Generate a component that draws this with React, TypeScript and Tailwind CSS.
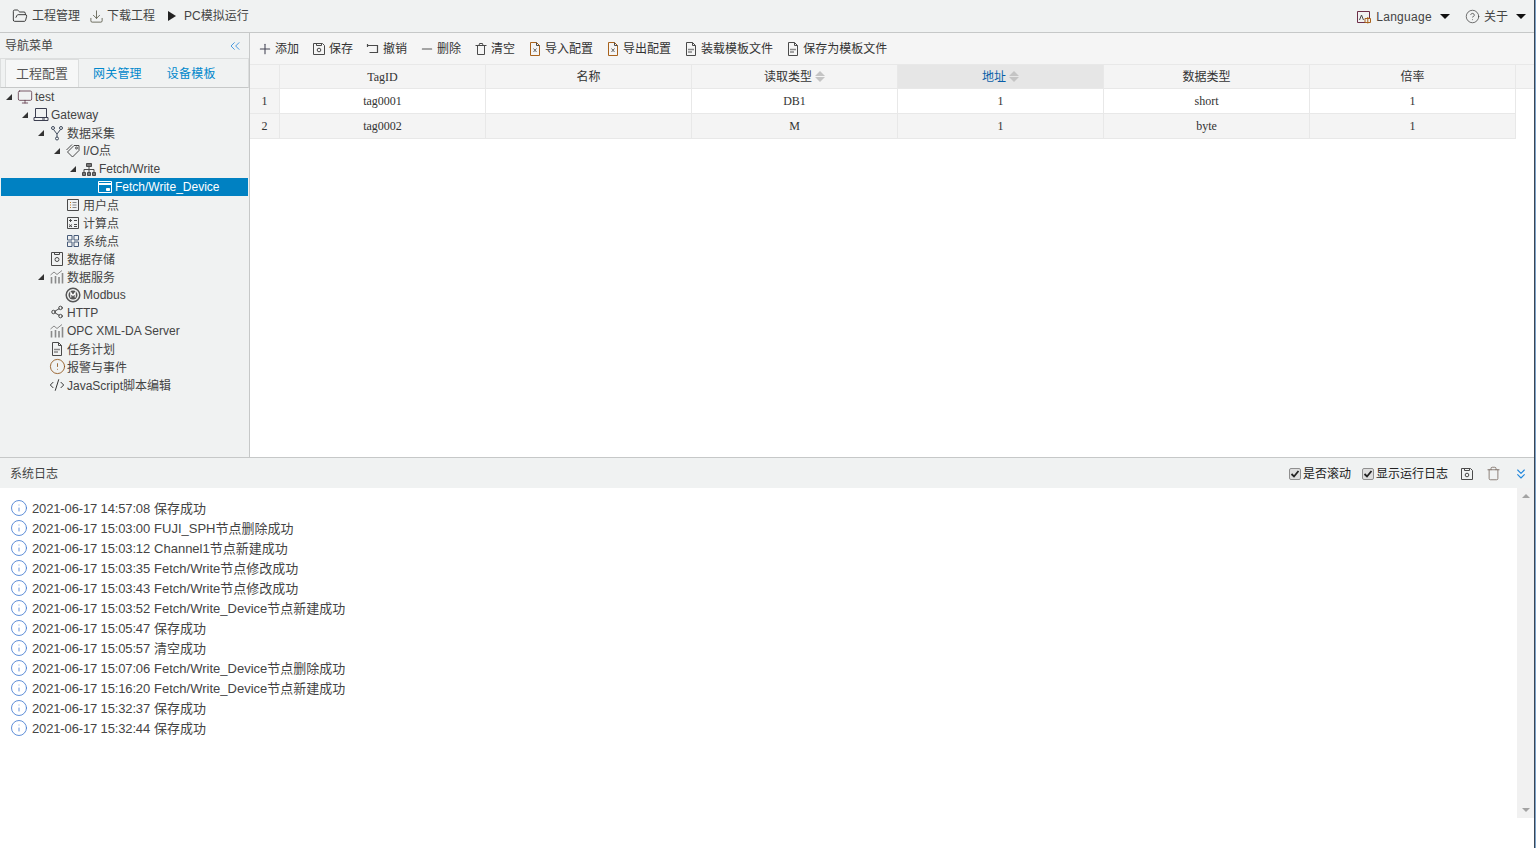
import type { ReactNode } from 'react';
import {
  AlertCircle,
  ChevronsLeft,
  ChevronsDown,
  CodeXml,
  Download,
  FolderOpen,
  HelpCircle,
  Info,
  Minus,
  Monitor,
  Plus,
  Share2,
  Trash,
} from 'lucide-react';

const cjk = "font-['Liberation_Sans','Noto_Sans_CJK_SC',sans-serif]";

type SvgProps = { children: ReactNode; className?: string };

function Ico({ children, className = 'text-[#4a4a4a]' }: SvgProps) {
  return (
    <svg width="16" height="16" viewBox="0 0 16 16" fill="none" stroke="currentColor" strokeWidth="1" className={`shrink-0 ${className}`}>
      {children}
    </svg>
  );
}

const SaveIco = () => (
  <Ico>
    <path d="M2.5 2.500h9l2 2v9h-11z" />
    <path d="M5.500 2.500v2h5v-2" />
    <circle cx="8" cy="9" r="1.800" />
  </Ico>
);
const UndoIco = () => (
  <Ico>
    <path d="M2.500 4.500h10v7h-8" strokeWidth="1.200" />
    <path d="M2.500 3v3" strokeWidth="1.200" />
  </Ico>
);
const ClearIco = () => (
  <Ico>
    <path d="M4.500 4.500v9h7v-9" />
    <path d="M2.500 4.500h11M6 4.500l.5-2h3l.5 2" />
  </Ico>
);
const FileXIco = () => (
  <Ico>
    <path d="M3.500 1.500h6l3 3v10h-9z" className="text-[#a8621c]" />
    <path d="M9.500 1.500v3h3" />
    <path d="M6.500 7.500l3 3.500M9.500 7.500l-3 3.500" className="text-[#666]" />
  </Ico>
);
const FileIco = () => (
  <Ico>
    <path d="M3.500 1.500h6l3 3v10h-9z" />
    <path d="M9.500 1.500v3h3" />
    <path d="M5 8.500h6M5 11h4" strokeWidth="1.400" className="text-[#888]" />
  </Ico>
);
const ForkIco = () => (
  <Ico className="text-[#3f4a5c]">
    <circle cx="4" cy="3" r="1.500" />
    <circle cx="12" cy="3" r="1.500" />
    <circle cx="8" cy="13.500" r="1.500" />
    <path d="M4.500 4.500L8 9l3.500-4.500M8 9v3" />
  </Ico>
);
const TagIco = () => (
  <Ico>
    <path d="M9 2.500h5v5l-6.500 6.500-5-5z" />
    <path d="M7 1.500l-5.500 5.500" />
    <circle cx="11.500" cy="5" r="1" />
  </Ico>
);
const LaptopIco = () => (
  <Ico className="text-[#3c3f50]">
    <path d="M2.500 1.500h11v9h-11z" />
    <path d="M1 13.500h14v-3H1z" />
    <path d="M9 12h3" />
  </Ico>
);
const NetworkIco = () => (
  <Ico>
    <path d="M5.500 2.500h5v3h-5z" fill="#777" />
    <path d="M8 5.500v3M3 11V8.500h10V11M8 8.500V11" />
    <path d="M1.500 11.500h3v3h-3zM6.500 11.500h3v3h-3zM11.500 11.500h3v3h-3z" fill="#777" />
  </Ico>
);
const DeviceIco = () => (
  <Ico className="text-white">
    <path d="M1.500 2.500h13v11h-13z" />
    <path d="M1.500 5h13" strokeWidth="2" />
    <path d="M9.500 9.500h3v2h-3z" fill="currentColor" />
  </Ico>
);
const ListIco = () => (
  <Ico>
    <path d="M2.500 2.500h11v11h-11z" />
    <path d="M5 5.500h1M5 8h1M5 10.500h1" className="text-[#c77a1e]" />
    <path d="M7.500 5.500h4M7.500 8h4M7.500 10.500h4" className="text-[#888]" />
  </Ico>
);
const CalcIco = () => (
  <Ico>
    <path d="M2.500 2.500h11v11h-11z" />
    <path d="M4 5.500h3M5.500 4v3M9 5.500h3M4 9.500l3 2.500M7 9.500L4 12M9 9.500h3M9 11.500h3" />
  </Ico>
);
const GridIco = () => (
  <Ico className="text-[#465a78]">
    <path d="M2.500 2.500h4.500v4.500h-4.500zM9 2.500h4.500v4.500H9zM2.500 9h4.500v4.500h-4.500zM9 9h4.500v4.500H9z" />
  </Ico>
);
const DbSaveIco = () => (
  <Ico>
    <path d="M2.500 1.500h11v13h-11z" />
    <path d="M5.500 1.500v2h5v-2" />
    <circle cx="8" cy="8.500" r="2" />
  </Ico>
);
const ChartIco = () => (
  <Ico className="text-[#8a8a8a]">
    <path d="M2.500 14.500V8M6.500 14.500V7M10 14.500V8M13.500 14.500V4" strokeWidth="1.600" />
    <path d="M1.500 6l3.500-3 3 2.500 5-4" />
  </Ico>
);
const ModbusIco = () => (
  <svg width="16" height="16" viewBox="0 0 16 16" className="shrink-0">
    <circle cx="8" cy="8" r="6.800" fill="none" stroke="#555" strokeWidth="1.500" />
    <circle cx="8" cy="8" r="4.500" fill="#555" />
    <path d="M5.800 10.500v-5l2.200 3 2.200-3v5" fill="none" stroke="#fff" strokeWidth="1.100" />
  </svg>
);
const LangIco = () => (
  <Ico>
    <path d="M1.500 2.500h12v11h-12z" className="text-[#6e2f48]" />
    <path d="M3.500 11l2-5 2 5" />
    <path d="M9 9.500h5.500v4H9z" fill="#f0f2f2" className="text-[#a8621c]" />
    <path d="M11.800 8v6.500" className="text-[#a8621c]" />
  </Ico>
);

type Node = { depth: number; label: string; icon: ReactNode; open?: boolean; selected?: boolean; low?: boolean };

const nodes: Node[] = [
  { depth: 0, label: 'test', open: true, icon: <Monitor size={16} strokeWidth={1.2} className="shrink-0 text-[#5a3444]" /> },
  { depth: 1, label: 'Gateway', open: true, icon: <LaptopIco /> },
  { depth: 2, label: '数据采集', open: true, low: true, icon: <ForkIco /> },
  { depth: 3, label: 'I/O点', open: true, icon: <TagIco /> },
  { depth: 4, label: 'Fetch/Write', open: true, icon: <NetworkIco /> },
  { depth: 5, label: 'Fetch/Write_Device', selected: true, icon: <DeviceIco /> },
  { depth: 3, label: '用户点', low: true, icon: <ListIco /> },
  { depth: 3, label: '计算点', low: true, icon: <CalcIco /> },
  { depth: 3, label: '系统点', low: true, icon: <GridIco /> },
  { depth: 2, label: '数据存储', low: true, icon: <DbSaveIco /> },
  { depth: 2, label: '数据服务', open: true, low: true, icon: <ChartIco /> },
  { depth: 3, label: 'Modbus', icon: <ModbusIco /> },
  { depth: 2, label: 'HTTP', icon: <Share2 size={14} strokeWidth={1.5} className="mx-px mb-[2px] shrink-0 text-[#333]" /> },
  { depth: 2, label: 'OPC XML-DA Server', icon: <ChartIco /> },
  { depth: 2, label: '任务计划', low: true, icon: <FileIco /> },
  { depth: 2, label: '报警与事件', low: true, icon: <AlertCircle size={17} strokeWidth={1.2} className="-mx-[0.5px] mb-[1px] shrink-0 text-[#8f5318]" /> },
  { depth: 2, label: 'JavaScript脚本编辑', low: true, icon: <CodeXml size={16} strokeWidth={1.5} className="shrink-0 text-[#333]" /> },
];

const toolbar: { label: string; icon: ReactNode }[] = [
  { label: '添加', icon: <Plus size={16} strokeWidth={1.6} className="shrink-0 text-[#445]" /> },
  { label: '保存', icon: <SaveIco /> },
  { label: '撤销', icon: <UndoIco /> },
  { label: '删除', icon: <Minus size={16} strokeWidth={1.6} className="shrink-0 text-[#555]" /> },
  { label: '清空', icon: <ClearIco /> },
  { label: '导入配置', icon: <FileXIco /> },
  { label: '导出配置', icon: <FileXIco /> },
  { label: '装载模板文件', icon: <FileIco /> },
  { label: '保存为模板文件', icon: <FileIco /> },
];

const columns = [
  { title: 'TagID' },
  { title: '名称' },
  { title: '读取类型', sort: true },
  { title: '地址', sort: true, active: true },
  { title: '数据类型' },
  { title: '倍率' },
];

const rows = [
  ['tag0001', '', 'DB1', '1', 'short', '1'],
  ['tag0002', '', 'M', '1', 'byte', '1'],
];

const logs = [
  ['2021-06-17 14:57:08', '保存成功'],
  ['2021-06-17 15:03:00', 'FUJI_SPH节点删除成功'],
  ['2021-06-17 15:03:12', 'Channel1节点新建成功'],
  ['2021-06-17 15:03:35', 'Fetch/Write节点修改成功'],
  ['2021-06-17 15:03:43', 'Fetch/Write节点修改成功'],
  ['2021-06-17 15:03:52', 'Fetch/Write_Device节点新建成功'],
  ['2021-06-17 15:05:47', '保存成功'],
  ['2021-06-17 15:05:57', '清空成功'],
  ['2021-06-17 15:07:06', 'Fetch/Write_Device节点删除成功'],
  ['2021-06-17 15:16:20', 'Fetch/Write_Device节点新建成功'],
  ['2021-06-17 15:32:37', '保存成功'],
  ['2021-06-17 15:32:44', '保存成功'],
];

function Caret() {
  return <span className="h-0 w-0 border-x-[5px] border-t-[5px] border-x-transparent border-t-[#111]" />;
}

function SortArrows() {
  return (
    <span className="flex flex-col gap-px">
      <span className="h-0 w-0 border-x-[5px] border-b-[5px] border-x-transparent border-b-[#c4c4c4]" />
      <span className="h-0 w-0 border-x-[5px] border-t-[5px] border-x-transparent border-t-[#c4c4c4]" />
    </span>
  );
}

function Check({ label }: { label: string }) {
  return (
    <div className="flex items-center gap-[2px]">
      <span className="flex h-3 w-3 items-center justify-center rounded-[2px] border border-[#8f8f8f] bg-[#dedede]">
        <svg width="10" height="10" viewBox="0 0 10 10" fill="none" stroke="#222" strokeWidth="1.800">
          <path d="M1.500 5l2.500 2.500 4.500-5.500" />
        </svg>
      </span>
      <span className="text-[#222]">{label}</span>
    </div>
  );
}

export default function App() {
  return (
    <div className={`flex h-screen overflow-hidden bg-white text-xs text-[#444] ${cjk}`}>
      <div className="flex min-w-0 flex-1 flex-col">
        {/* top bar */}
        <div className="flex h-[33px] shrink-0 items-center justify-between border-b border-[#c6c8c8] bg-[#f0f2f2]">
          <div className="flex items-center pl-[12px]">
            <div className="flex items-center gap-[4px]">
              <FolderOpen size={16} strokeWidth={1.3} className="text-[#222]" />
              <span>工程管理</span>
            </div>
            <div className="ml-[9px] flex items-center gap-[3px]">
              <Download size={15} strokeWidth={1.3} className="text-[#554]" />
              <span>下载工程</span>
            </div>
            <div className="ml-[12px] flex items-center gap-[8px]">
              <svg width="8" height="10" viewBox="0 0 8 10" className="ml-[1px]"><path d="M0 0l8 5-8 5z" fill="#222" /></svg>
              <span>PC模拟运行</span>
            </div>
          </div>
          <div className="flex items-center pr-[8px] pt-[1px]">
            <div className="flex items-center gap-[4px]">
              <LangIco />
              <span className="tracking-[0.3px]">Language</span>
              <span className="ml-[4px] flex"><Caret /></span>
            </div>
            <div className="ml-[15px] flex items-center gap-[4px]">
              <HelpCircle size={15} strokeWidth={1.2} className="text-[#444]" />
              <span>关于</span>
              <span className="ml-[4px] flex"><Caret /></span>
            </div>
          </div>
        </div>

        <div className="flex h-[424px] shrink-0">
          {/* sidebar */}
          <aside className="flex w-[250px] shrink-0 flex-col border-r border-[#c6c8c8] bg-[#f0f2f2]">
            <div className="flex h-[25px] shrink-0 items-center justify-between pl-[5px] pr-[6px]">
              <span>导航菜单</span>
              <ChevronsLeft size={16} strokeWidth={1.5} className="text-[#4a9ae0]" />
            </div>
            <div className="flex h-[30px] shrink-0 items-end border border-b-[#c6c8c8] border-[#dcdede] pl-[4px] text-[#0088cc]">
              <div className="flex h-[28px] w-[74px] items-center justify-center border border-b-0 border-[#dcdede] bg-[#f6f7f7] pt-[1px] text-[13px] text-[#555]">
                工程配置
              </div>
              <div className="ml-[14px] flex h-[28px] items-center pt-[2px] tracking-[0.2px]">网关管理</div>
              <div className="ml-[25px] flex h-[28px] items-center pt-[2px] tracking-[0.2px]">设备模板</div>
            </div>
            <div className="flex flex-col px-[1px]">
              {nodes.map((n) => (
                <div
                  key={n.label + n.depth}
                  style={{ paddingLeft: n.depth * 16 }}
                  className={`flex h-[18px] items-center ${n.selected ? 'bg-[#0081c2] text-white' : ''}`}
                >
                  <span className="flex w-[16px] shrink-0 items-center justify-center pr-[1px]">
                    {n.open && <span className="h-0 w-0 border-b-[6px] border-l-[6px] border-b-[#333] border-l-transparent" />}
                  </span>
                  {n.icon}
                  <span className={`ml-[2px] whitespace-nowrap ${n.low ? 'pt-[2px]' : ''}`}>{n.label}</span>
                </div>
              ))}
            </div>
          </aside>

          {/* main */}
          <main className="flex min-w-0 flex-1 flex-col">
            <div className="flex h-[31px] shrink-0 items-center bg-[#f5f5f5] pl-[7px] pt-[1px]">
              {toolbar.map((t) => (
                <div key={t.label} className="mr-[12px] flex items-center gap-[2px] text-[#333]">
                  {t.icon}
                  <span className="whitespace-nowrap">{t.label}</span>
                </div>
              ))}
            </div>
            <div className="flex h-[25px] shrink-0 border-y border-[#e8e8e8] bg-[#f4f4f4] font-['Liberation_Serif','Noto_Sans_CJK_SC',serif]">
              <div className="w-[30px] shrink-0 border-r border-[#e8e8e8]" />
              {columns.map((c) => (
                <div
                  key={c.title}
                  className={`flex w-[206px] shrink-0 items-center justify-center gap-[3px] border-r border-[#e8e8e8] ${c.active ? 'bg-[#e6e6e6] text-[#0a5ea8]' : 'text-[#333]'}`}
                >
                  <span>{c.title}</span>
                  {c.sort && <SortArrows />}
                </div>
              ))}
            </div>
            {rows.map((r, i) => (
              <div
                key={r[0]}
                className={`flex h-[25px] w-[1266px] shrink-0 border-b border-[#e8e8e8] font-['Liberation_Serif','Noto_Sans_CJK_SC',serif] text-[#333] ${i === 1 ? 'bg-[#f4f4f4]' : ''}`}
              >
                <div className="flex w-[30px] shrink-0 items-center justify-center border-r border-[#e8e8e8] bg-[#f4f4f4]">{i + 1}</div>
                {r.map((v, j) => (
                  <div key={j} className="flex w-[206px] shrink-0 items-center justify-center border-r border-[#e8e8e8]">
                    {v}
                  </div>
                ))}
              </div>
            ))}
          </main>
        </div>

        {/* system log */}
        <section className="flex min-h-0 flex-1 flex-col border-t border-[#c6c8c8]">
          <div className="flex h-[30px] shrink-0 items-center justify-between bg-[#f0f2f2] pl-[10px] pr-[5px] pt-[1px]">
            <span>系统日志</span>
            <div className="flex items-center">
              <Check label="是否滚动" />
              <div className="ml-[11px]"><Check label="显示运行日志" /></div>
              <div className="ml-[11px]"><SaveIco /></div>
              <div className="ml-[11px]"><Trash size={15} strokeWidth={1.2} className="text-[#6e5e54]" /></div>
              <div className="ml-[12px]"><ChevronsDown size={16} strokeWidth={1.6} className="text-[#1f86dc]" /></div>
            </div>
          </div>
          <div className="flex min-h-0 flex-1">
            <div className="min-w-0 flex-1 pl-[10px] pt-[11px]">
              {logs.map(([time, msg]) => (
                <div key={time} className="flex h-[20px] items-center text-[13px] text-[#444]">
                  <Info size={18} strokeWidth={1.1} className="mb-[3px] shrink-0 text-[#3f78d0]" />
                  <span className="ml-[4px] whitespace-nowrap tracking-[-0.14px]">{time}</span>
                  <span className="ml-[4px] whitespace-nowrap">{msg}</span>
                </div>
              ))}
            </div>
            <div className="mb-[30px] flex w-[17px] shrink-0 flex-col items-center justify-between bg-[#f1f1f1] py-[6px]">
              <span className="h-0 w-0 border-x-[4px] border-b-[4px] border-x-transparent border-b-[#a3a3a3]" />
              <span className="h-0 w-0 border-x-[4px] border-t-[4px] border-x-transparent border-t-[#a3a3a3]" />
            </div>
          </div>
        </section>
      </div>
      {/* window edge */}
      <div className="w-px shrink-0 bg-[#3a4656]" />
      <div className="w-px shrink-0 bg-[#7ea3c8]" />
    </div>
  );
}
